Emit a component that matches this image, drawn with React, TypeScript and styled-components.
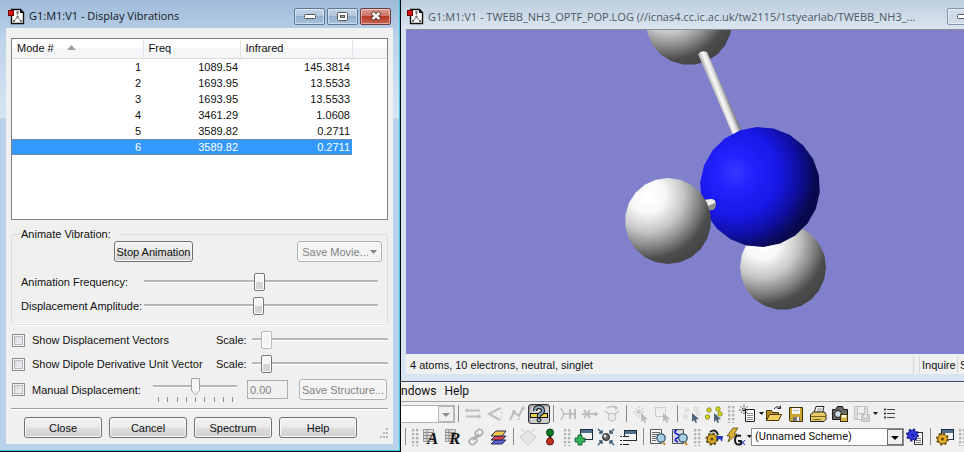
import React from "react";
import styled, { createGlobalStyle, css } from "styled-components";

const SANS = '"Liberation Sans", Arial, sans-serif';
const UI = 'Roboto, "Open Sans", sans-serif';

const Global = createGlobalStyle`
  *, *::before, *::after { box-sizing: border-box; }
  body { margin: 0; background: #f0f0f0; color: #111; font: 11px/16px ${SANS}; }
  button, input, select { font: inherit; color: inherit; margin: 0; }
`;

const Desktop = styled.div`
  display: flex;
  min-height: 100vh;
  overflow: hidden;
`;

/* ---------- dialog window ---------- */

const Dialog = styled.section`
  flex: 1 1 401px;
  min-width: 0;
  display: flex;
  flex-direction: column;
  padding: 0 7px 7px 6px;
  border-right: 1px solid #05080c;
  border-bottom: 1px solid #05080c;
  box-shadow: inset -1px -1px 0 #3fc4dc;
  background: linear-gradient(#9fbbd9 0, #b4cbe4 28px, #bed3e9 40px, #d6e5f4 118px, #b9d1ea 119px);
`;

const TitleBar = styled.header<{ $inactive?: boolean }>`
  display: flex;
  align-items: center;
  gap: 4px;
  height: ${(p) => (p.$inactive ? 29 : 28)}px;
  padding: ${(p) => (p.$inactive ? "4px 0 0 6px" : "4px 2px 0 2px")};
  overflow: hidden;
  font-family: "Open Sans", "Noto Sans", sans-serif;
  color: ${(p) => (p.$inactive ? "#4c5866" : "#101820")};
  background: ${(p) => (p.$inactive ? "linear-gradient(#bccddd, #dbe6f0)" : "none")};
`;

const Title = styled.h1`
  flex: 1;
  min-width: 0;
  margin: 0;
  overflow: hidden;
  white-space: nowrap;
  font-size: 11px;
  line-height: 16px;
  font-weight: 400;
`;

const Caption = styled.div`
  display: flex;
  flex: none;
  gap: 2px;
`;

const CaptionButton = styled.button<{ $close?: boolean; $pale?: boolean }>`
  flex: none;
  display: flex;
  align-items: center;
  justify-content: center;
  width: 31px;
  height: 17px;
  padding: 0;
  margin-right: ${(p) => (p.$pale ? -14 : 0)}px;
  border: 1px solid ${(p) => (p.$close ? "#6a3a40" : p.$pale ? "#8295aa" : "#5f7896")};
  border-radius: 2px;
  box-shadow: inset 0 0 0 1px rgba(255, 255, 255, 0.45);
  background: ${(p) =>
    p.$close
      ? "linear-gradient(#d99a90 0 , #cf7467 45%, #b5392b 50%, #cc6450)"
      : p.$pale
        ? "#cfdce8"
        : "linear-gradient(#c3d5e8, #b0c6de 45%, #93afcd 50%, #a9c3de)"};
`;

const Body = styled.form`
  flex: 1;
  display: flex;
  flex-direction: column;
  padding: 10px 5px 5px 5px;
  background: #f0f0f0;
`;

const ListBox = styled.div`
  height: 182px;
  border: 1px solid #7c8087;
  background: #fff;
  overflow: hidden;
`;

const Table = styled.table`
  width: 100%;
  border-collapse: collapse;
  table-layout: fixed;
`;

const Head = styled.th`
  height: 19px;
  padding: 0 6px 0 5px;
  text-align: left;
  font-weight: 400;
  white-space: nowrap;
  border-right: 1px solid #e0e3e8;
  border-bottom: 1px solid #d8dadf;
  background: linear-gradient(#fff 0 45%, #f5f6f8 50%);
  &:last-child { border-right: 0; }
  svg { margin-left: 10px; vertical-align: 2px; }
`;

const Row = styled.tr<{ $selected?: boolean }>`
  ${(p) =>
    p.$selected &&
    css`
      color: #fff;
      td:not(:last-child) { background: linear-gradient(#7288a8 1px, #3399ff 1px 15px, #7288a8 15px); }
    `}
`;

const Cell = styled.td`
  height: 16px;
  padding: 0 2px 0 0;
  line-height: 16px;
  text-align: right;
`;

const Group = styled.fieldset`
  display: flex;
  flex-direction: column;
  min-width: 0;
  margin: 6px 0 0;
  padding: 0 4px 6px 9px;
  border: 1px solid #d8dde1;
  border-radius: 3px;
  box-shadow: inset 0 -1px 0 #fff, 0 1px 0 #fff;
`;

const Legend = styled.legend`
  padding: 0 8px 0 0;
  line-height: 16px;
`;

const Line = styled.div<{ $h?: number; $end?: number }>`
  display: flex;
  align-items: center;
  height: ${(p) => p.$h ?? 24}px;
  padding-right: ${(p) => p.$end ?? 0}px;
`;

const GroupActions = styled.div`
  display: flex;
  justify-content: space-between;
  padding: 0 1px 8px 93px;
  margin-top: -1px;
`;

const Button = styled.button<{ $w: number }>`
  flex: none;
  width: ${(p) => p.$w}px;
  height: 21px;
  padding: 0;
  display: flex;
  align-items: center;
  justify-content: center;
  gap: 1px;
  white-space: nowrap;
  border: 1px solid #707070;
  border-radius: 3px;
  box-shadow: inset 0 0 0 1px #fafafa;
  background: linear-gradient(#f3f3f3, #ebebeb 48%, #dedede 52%, #d0d0d0);
  &:disabled {
    color: #838383;
    border-color: #adb2b5;
    background: #f4f4f4;
  }
`;

const SliderLabel = styled.label<{ $w: number }>`
  flex: none;
  width: ${(p) => p.$w}px;
  white-space: nowrap;
`;

const POINTER =
  "data:image/svg+xml,%3Csvg xmlns='http://www.w3.org/2000/svg' width='11' height='18'%3E%3Cpath d='M1.5 .5h8v12l-4 4.500l-4-4.500z' fill='%23f5f5f5' stroke='%23a4a4a4'/%3E%3C/svg%3E";

const Slider = styled.input<{ $pointer?: boolean }>`
  -webkit-appearance: none;
  appearance: none;
  flex: ${(p) => (p.$pointer ? "none" : 1)};
  min-width: 0;
  height: 18px;
  margin-bottom: ${(p) => (p.$pointer ? 0 : 2)}px;
  background: none;
  &::-webkit-slider-runnable-track {
    height: 3px;
    border-top: 2px solid #b4b6b8;
    border-bottom: 1px solid #fff;
  }
  &::-webkit-slider-thumb {
    -webkit-appearance: none;
    width: 11px;
    height: 18px;
    margin-top: -9px;
    border: 1px solid #777;
    border-radius: 2px;
    box-shadow: inset 0 0 0 1px #fff;
    background: linear-gradient(#f4f4f4 50%, #d4d4d4 50%);
    ${(p) =>
      p.$pointer &&
      css`
        border: 0;
        box-shadow: none;
        background: url("${POINTER}") no-repeat;
      `}
  }
  &:disabled::-webkit-slider-thumb {
    border-color: #b8b8b8;
    ${(p) => !p.$pointer && "background: #f4f4f4;"}
  }
`;

const Checkbox = styled.input`
  appearance: none;
  flex: none;
  width: 13px;
  height: 13px;
  margin: 0 7px 0 0;
  border: 1px solid #8c8e90;
  box-shadow: inset 0 0 0 1px #f4f4f4, inset 0 0 0 2px #b8bcc0;
  background: linear-gradient(135deg, #d2d5d8, #f6f6f6);
`;

const CheckLabel = styled.label<{ $w: number }>`
  display: flex;
  align-items: center;
  flex: none;
  width: ${(p) => p.$w}px;
  padding-left: 1px;
  white-space: nowrap;
`;

const Checks = styled.div`
  display: flex;
  flex-direction: column;
  padding-top: 3px;
`;

const TickSlider = styled.div`
  display: flex;
  flex-direction: column;
  width: 84px;
`;

const Ticks = styled.div`
  display: flex;
  justify-content: space-between;
  height: 5px;
  padding: 0 4px 0 5px;
  margin-top: 2px;
  i { width: 1px; background: #8f8f8f; }
`;

const ValueBox = styled.input`
  flex: none;
  width: 41px;
  height: 19px;
  margin: 0 11px 0 10px;
  padding: 0 2px;
  border: 1px solid #a9adb2;
  border-radius: 0;
  background: #f0f0f0;
  &:disabled { color: #838383; }
`;

const Footer = styled.footer`
  display: flex;
  gap: 7px;
  margin-top: 5px;
  padding: 8px 0 0 13px;
  border-top: 1px solid #a0a0a0;
  box-shadow: inset 0 1px 0 #fff;
`;

const GripCorner = styled.svg`
  align-self: flex-end;
  margin-left: auto;
`;

/* ---------- right side ---------- */

const RightSide = styled.div`
  flex: 1 1 563px;
  min-width: 0;
  display: flex;
  flex-direction: column;
`;

const Viewer = styled.section`
  flex: 1;
  display: flex;
  flex-direction: column;
  border-bottom: 1px solid #40474e;
`;

const ViewerFrame = styled.div`
  flex: 1;
  display: flex;
  flex-direction: column;
  padding: 0 0 7px 5px;
  background: #d7e4f1;
`;

const Canvas = styled.div`
  flex: 1;
  display: flex;
  min-height: 200px;
  border-top: 1px solid #8c8c98;
  background: #8080cc;
  svg { flex: 1; width: 0; min-width: 100%; height: 0; min-height: 100%; }
`;

const StatusBar = styled.footer`
  display: flex;
  align-items: center;
  height: 20px;
  padding: 2px 0 0 4px;
  white-space: nowrap;
  overflow: hidden;
  background: #f0f0f0;
`;

const StatusText = styled.span`
  flex: 1;
`;

const Pane = styled.span<{ $w: number }>`
  flex: none;
  width: ${(p) => p.$w}px;
  height: 16px;
  padding-left: 2px;
  border-left: 1px solid #d4d4d4;
`;

const Menu = styled.nav`
  display: flex;
  gap: 8px;
  height: 20px;
  padding-bottom: 2px;
  align-items: center;
  border-bottom: 1px solid #a5a5a5;
  font-family: ${UI};
  font-size: 12px;
  a { color: inherit; text-decoration: none; }
`;

const Toolbar = styled.div`
  display: flex;
  align-items: center;
  height: 23px;
  overflow: hidden;
`;

const Toolbars = styled.div`
  padding: 0 0 4px;
`;

const Tool = styled.button<{ $active?: boolean }>`
  flex: none;
  display: flex;
  align-items: center;
  justify-content: center;
  width: 22px;
  height: 20px;
  padding: 0;
  border: ${(p) => (p.$active ? "1px solid #333" : "0")};
  border-radius: 3px;
  background: ${(p) => (p.$active ? "#cfcfcf" : "none")};
  box-shadow: ${(p) => (p.$active ? "inset 1px 1px 2px #888" : "none")};
  svg { flex: none; overflow: visible; }
`;

const Divider = styled.span<{ $w: number }>`
  flex: none;
  width: ${(p) => p.$w}px;
  height: 17px;
  background: linear-gradient(#8a8a8a, #8a8a8a) center / 1px 100% no-repeat;
`;

const Handle = styled.span`
  flex: none;
  width: 12px;
  height: 18px;
  background: radial-gradient(circle at 1px 1px, #b4b4b4 1px, transparent 2px) 3px 1px / 4px 4px;
  background-clip: content-box;
  padding: 0 2px 0 3px;
`;

const DropArrow = styled.button`
  flex: none;
  display: flex;
  justify-content: center;
  width: 4px;
  height: 18px;
  align-items: center;
  padding: 0;
  border: 0;
  background: none;
  svg { flex: none; width: 5px; height: 3px; }
`;

const Combo = styled.select<{ $w: number }>`
  appearance: none;
  flex: none;
  width: ${(p) => p.$w}px;
  height: 18px;
  padding: 0 18px 0 3px;
  border: 1px solid #8c8c8c;
  border-radius: 0;
  font-family: ${UI};
  font-size: 11px;
  line-height: 14px;
  background:
    url("data:image/svg+xml,%3Csvg xmlns='http://www.w3.org/2000/svg' width='16' height='16'%3E%3Crect x='.5' y='.5' width='15' height='15' fill='%23f0f0f0' stroke='%23707070'/%3E%3Cpath d='M4 7h8l-4 4z' fill='%23000'/%3E%3C/svg%3E") right center no-repeat,
    #fff;
  &:disabled {
    opacity: 1;
    border-left: 0;
    border-color: #b4b4b4;
    background:
      url("data:image/svg+xml,%3Csvg xmlns='http://www.w3.org/2000/svg' width='16' height='16'%3E%3Crect x='.5' y='.5' width='15' height='15' fill='%23f0f0f0' stroke='%23b8b8b8'/%3E%3Cpath d='M4 7h8l-4 4z' fill='%23909090'/%3E%3C/svg%3E") right center no-repeat,
      #fff;
  }
`;

/* ---------- drawings ---------- */

const AppIcon = () => (
  <svg width="17" height="17" viewBox="0 0 17 17">
    <path d="M3.500 1.500h9l3 3v11h-12z" fill="#fff" stroke="#111" strokeWidth="1.400" />
    <path d="M12 1v4h4" fill="#111" />
    <path d="M9.500 4v5M9.500 9l-3.500 4M9.500 9l3.500 4" stroke="#aaa" strokeWidth="1.200" fill="none" />
    <g fill="#777"><rect x="8.500" y="3" width="2" height="3" /><rect x="8.500" y="8" width="2" height="2" /><rect x="5" y="12" width="2" height="2" /><rect x="12" y="12" width="2" height="2" /></g>
    <rect x=".5" y="2.500" width="5" height="5" fill="#d80f0f" stroke="#700" />
  </svg>
);

const Down = ({ color = "#111" }: { color?: string }) => (
  <svg width="7" height="4" viewBox="0 0 7 4"><path d="M0 0h7L3.500 4z" fill={color} /></svg>
);

const SIDES = 22;
const facets = (cx: number, cy: number, r: number, turn = 0) =>
  Array.from({ length: SIDES }, (_, i) => {
    const a = ((i + turn) * Math.PI * 2) / SIDES;
    return `${(cx + r * Math.cos(a)).toFixed(1)},${(cy + r * Math.sin(a)).toFixed(1)}`;
  }).join(" ");

const Molecule = () => (
  <svg viewBox="0 0 558 324" preserveAspectRatio="xMidYMin slice" role="img" aria-label="Ammonia molecule">
    <defs>
      <radialGradient id="h" cx=".26" cy=".2" r=".88">
        <stop offset="0" stopColor="#fff" /><stop offset=".24" stopColor="#f7f7f7" />
        <stop offset=".48" stopColor="#c6c6c6" /><stop offset=".68" stopColor="#858585" />
        <stop offset=".84" stopColor="#4c4c4c" /><stop offset="1" stopColor="#444" />
      </radialGradient>
      <radialGradient id="n" cx=".29" cy=".38" r=".76">
        <stop offset="0" stopColor="#3838ff" /><stop offset=".2" stopColor="#2222fe" />
        <stop offset=".48" stopColor="#1818e6" /><stop offset=".7" stopColor="#0f0fa0" />
        <stop offset=".88" stopColor="#090952" /><stop offset="1" stopColor="#080848" />
      </radialGradient>
      <linearGradient id="b" gradientUnits="userSpaceOnUse" x1="309" y1="64" x2="319" y2="60">
        <stop offset="0" stopColor="#b8b8b8" /><stop offset=".35" stopColor="#fafafa" />
        <stop offset=".65" stopColor="#d8d8d8" /><stop offset="1" stopColor="#707070" />
      </linearGradient>
    </defs>
    <polygon points={facets(283, -8, 43)} fill="url(#h)" />
    <path d="M292 24q3-4 9-2l36 82-8 6z" fill="url(#b)" />
    <polygon points={facets(377, 237, 43)} fill="url(#h)" />
    <polygon points={facets(354, 157, 60, 0.3)} fill="url(#n)" />
    <path d="M298 170l8-1q4 1 4 5 0 4-3 6l-9 1z" fill="#8c8c8c" />
    <path d="M298 170l8-1q4 1 3 4l-7 3z" fill="#ececec" />
    <polygon points={facets(262, 191, 43, 0.5)} fill="url(#h)" />
  </svg>
);

const Ico = ({ children, c = "none", s }: { children: React.ReactNode; c?: string; s?: string }) => (
  <svg width="18" height="18" viewBox="0 0 18 18" fill={c} stroke={s}>{children}</svg>
);

const G = "#bdbdbd";
const BondIcon = () => <Ico s={G}><path d="M2 5.500h14M2 11.500h14" strokeWidth="2" /><path d="M4 3.500L1 5.500l3 2M14 9.500l3 2-3 2" /></Ico>;
const AngleIcon = () => <Ico s={G}><path d="M14 3L3 9l11 6" strokeWidth="2" /><path d="M14 3q4 6 0 12" strokeDasharray="2 2" /></Ico>;
const DihedralIcon = () => <Ico s={G}><path d="M2 15l4-8 5 4 4-8" strokeWidth="2" /><circle cx="15" cy="3" r="1.500" /><circle cx="6" cy="7" r="1.500" /><path d="M9 14h3" /></Ico>;
const QueryIcon = () => (
  <Ico>
    <path d="M0 10.500h18" stroke="#111" strokeWidth="5" /><path d="M1 10.500h16" stroke="#e8d23c" strokeWidth="3" />
    <path d="M5 6q0-4 4-4t4 4q0 2-4 4v2" fill="none" stroke="#111" strokeWidth="4" />
    <path d="M5 6q0-4 4-4t4 4q0 2-4 4v2" fill="none" stroke="#8fa9bd" strokeWidth="2" />
    <circle cx="9" cy="15" r="2" fill="#8fa9bd" stroke="#111" />
  </Ico>
);
const AddHIcon = () => <Ico s={G}><path d="M2 3l3 6-3 6M5 9h5" strokeWidth="1.500" /><path d="M11 4v10M16 4v10M11 9h5" strokeWidth="2" /></Ico>;
const CutIcon = () => <Ico s={G}><path d="M1 9h15" strokeWidth="2" /><path d="M3 5l6 8M3 13l6-8" strokeWidth="2" /><circle cx="15" cy="9" r="1.500" /></Ico>;
const RotateIcon = () => <Ico s={G}><path d="M2 6l7 5 7-5M4 3q5-3 10 0M12 1l2 2-2 2" strokeWidth="1.300" /><circle cx="9" cy="12" r="4" fill="#e8e8e8" /></Ico>;
const Pointer = ({ c }: { c: string }) => <path d="M9 8l7 6-3 .500 1 3-1.500.500-1.500-3-2 2z" fill={c} stroke="none" />;
const StarSel = () => <Ico s={G}><path d="M7 1v12M1 7h12M3 3l8 8M11 3l-8 8" strokeDasharray="2 1" /><Pointer c="#bbb" /></Ico>;
const BoxSel = () => <Ico s={G}><rect x="1.500" y="2.500" width="10" height="9" strokeDasharray="2 1" /><Pointer c="#bbb" /></Ico>;
const AtomsSel = ({ on }: { on?: boolean }) => (
  <Ico>
    {[[4, 5], [13, 4], [2.5, 12], [15, 9]].map(([x, y]) => <circle key={x} cx={x} cy={y} r="2.200" fill={on ? "#d8dc20" : "#e3e3e3"} stroke={on ? "#777a10" : "#d8d8d8"} strokeWidth=".8" />)}
    <Pointer c="#4e6377" />
  </Ico>
);
const NewIcon = () => (
  <Ico><path d="M6.500 4.500h9v12h-9z" fill="#fff" stroke="#222" /><path d="M8 8.500h6M8 10.500h6M8 12.500h6M8 14.500h6" stroke="#888" /><path d="M5 0v10M0 5h10M1.500 1.500l7 7M8.500 1.500l-7 7" stroke="#333" strokeDasharray="1.500 1" /></Ico>
);
const OpenIcon = () => (
  <Ico><path d="M1.500 15.500v-10h5l1 2h6v8z" fill="#b88f1c" stroke="#4a3908" /><path d="M1.500 15.500l3-6h12l-3 6z" fill="#f2cf58" stroke="#4a3908" /><path d="M9 4q3-4 6-1M15.500 .5v3h-3" stroke="#222" /></Ico>
);
const SaveIcon = () => (
  <Ico><path d="M2.500 2.500h13v14h-12l-1-1z" fill="#c9a52e" stroke="#3d3108" /><rect x="5" y="3" width="8" height="6" fill="#f4f4f4" /><path d="M6 5.500h6" stroke="#bbb" /><rect x="6" y="12" width="7" height="4" fill="#777" /><rect x="10" y="12" width="2" height="4" fill="#eee" /></Ico>
);
const PrintIcon = () => (
  <Ico><path d="M5 8l2-6.500h8L13.500 8" fill="#fff" stroke="#222" /><path d="M8 4h5M7.500 6h5" stroke="#888" /><path d="M1.500 9.500l3-2.500h11l1.500 2.500v5l-2 2h-13.500z" fill="#e6ca66" stroke="#222" /><path d="M2 11.500h14M4 14.500h8" stroke="#7c6820" /></Ico>
);
const CameraIcon = () => (
  <Ico><path d="M1.500 4.500h3l2-3h5l1 3h4v10h-15z" fill="#6a6a66" stroke="#181818" /><circle cx="7" cy="9" r="3.500" fill="#c8dbe2" stroke="#111" /><rect x="9.500" y="9.500" width="7" height="7" fill="#d9b641" stroke="#3d3108" /><rect x="11" y="10" width="4" height="2.500" fill="#fff" /></Ico>
);
const FilmIcon = () => (
  <Ico s="#c0c0c0"><path d="M1.500 1.500h13v13h-13zM4.500 1.500v13M11.500 1.500v13M4.500 8.500h7" /><path d="M2 4h2M2 7h2M2 10h2M2 13h2M12 4h2M12 7h2" /><rect x="8.500" y="9.500" width="8" height="7" fill="#d0d0d0" /><path d="M11 10v3h3v-3" fill="#fff" /></Ico>
);
const ListIcon = () => <Ico><path d="M8 4.500h8M8 8.500h8M8 12.500h8" stroke="#444" /><path d="M5 4.500h2M5 8.500h2M5 12.500h2" stroke="#444" strokeWidth="2" /></Ico>;

const Letter = styled.text`
  font: italic 700 17px "Liberation Serif", serif;
  fill: #111;
`;
const LetterDoc = ({ l }: { l: string }) => (
  <Ico><path d="M.5 1.500h10v12H.5z" fill="#ddd" stroke="#999" /><path d="M1 4.500h9M1 7.500h9M1 10.500h9M4 2v11" stroke="#888" /><Letter x="4" y="16">{l}</Letter></Ico>
);
const LinkIcon = () => <Ico s="#a9a9a9"><rect x="8" y="2" width="8" height="6" rx="3" transform="rotate(-40 12 5)" strokeWidth="1.500" /><rect x="2" y="10" width="8" height="6" rx="3" transform="rotate(-40 6 13)" strokeWidth="1.500" /><path d="M6 12l6-6" strokeWidth="2" /></Ico>;
const LayersIcon = () => (
  <Ico s="#2b2b50">
    <path d="M2 16l4-4h11l-4 4z" fill="#5a66d8" /><path d="M2 12l4-4h11l-4 4z" fill="#d94050" /><path d="M2 8l5-5h10l-4 5z" fill="#efc84a" />
  </Ico>
);
const DiamondIcon = () => <Ico s="#c6c6c6"><path d="M9 2l8 7-8 8-8-8z" fill="#e6e6e6" /><path d="M2 1l3 3M16 1l-3 3" /></Ico>;
const DumbbellIcon = () => <Ico><path d="M9 3v12" stroke="#333" strokeWidth="3" /><circle cx="9" cy="4.500" r="3.500" fill="#0c7a22" stroke="#084010" /><circle cx="9" cy="13.500" r="3.500" fill="#c23216" stroke="#611" /></Ico>;
const Win = ({ x = 4, y = 2 }) => <><rect x={x + 0.5} y={y + 0.5} width="12" height="10" fill="#f4f4f4" stroke="#1e2c38" /><rect x={x + 1} y={y + 1} width="11" height="3" fill="#4d718e" /></>;
const AddWinIcon = () => <Ico><Win x={5} y={1} /><path d="M3 7h4v3h3v4H7v3H3v-3H0v-4h3z" fill="#34b559" stroke="#0e5225" strokeWidth=".8" /></Ico>;
const FitIcon = () => <Ico><path d="M1 1l4 4M17 1l-4 4M1 17l4-4M17 17l-4-4M5 2v3H2M13 2v3h3M5 16v-3H2M13 16v-3h3" stroke="#35566f" strokeWidth="1.300" /><circle cx="9" cy="9" r="3.500" fill="#666" stroke="#222" /><circle cx="8" cy="8" r="1.500" fill="#ddd" /></Ico>;
const ListWinIcon = () => <Ico><Win x={5} y={2} /><rect x="0" y="8" width="10" height="9" fill="#f4f4f4" /><path d="M1 8.500h2M1 12.500h2M1 16.500h2M4 8.500h6M4 12.500h6M4 16.500h6" stroke="#222" /></Ico>;
const DocFind = ({ wave }: { wave?: boolean }) => (
  <Ico><path d="M1.500 1.500h11v14h-11z" fill={wave ? "#d8d8e0" : "#f4f4f4"} stroke="#555" />
    {wave ? <path d="M6 2q-5 2 0 4t0 4q-4 2 1 4" stroke="#1414d0" strokeWidth="1.500" /> : <path d="M3 4.500h8M3 6.500h8M3 8.500h4M3 10.500h4M3 12.500h4" stroke="#666" />}
    <circle cx="12" cy="10" r="4.200" fill="#a9cfe6" stroke="#35566f" strokeWidth="1.300" /><path d="M14 14l2 3" stroke="#c08a30" strokeWidth="2" /></Ico>
);
const Cog = ({ x, y, c, d }: { x: number; y: number; c: string; d: string }) => (
  <g><circle cx={x} cy={y} r="5" fill="none" stroke={d} strokeWidth="3" strokeDasharray="2 1.900" /><circle cx={x} cy={y} r="4.800" fill={c} stroke={d} /><circle cx={x} cy={y} r="1.500" fill={d} /></g>
);
const GearArrow = () => <Ico><Cog x={7} y={11} c="#d8a820" d="#5c4408" /><path d="M5 4q6-4 8 3" stroke="#222" strokeWidth="2" /><path d="M12 8h6l-1 6-2-3-3 1z" fill="#223cc0" /></Ico>;
const BoltG = () => <Ico><path d="M6 0h5L7 6h3L1 14l2-6H0z" fill="#dcb43c" stroke="#5c4408" strokeWidth=".8" /><path d="M14 8q-6-2-6 4t6 4v-3h-3" stroke="#1c1c1c" strokeWidth="2" /><path d="M14 12l4 5M18 12l-4 5" stroke="#2233c0" /></Ico>;
const BlueGear = () => <Ico><rect x="8.500" y="4.500" width="8" height="12" fill="#fff" stroke="#333" /><path d="M10 10.500h5M10 12.500h5M10 14.500h5" stroke="#777" /><Cog x={6.5} y={7} c="#3038dd" d="#181c90" /></Ico>;
const GearWin = () => <Ico><Win x={5} y={1} /><Cog x={6.5} y={11} c="#e2ac2c" d="#6c4a08" /></Ico>;

/* ---------- data ---------- */

const modes = [
  ["1", "1089.54", "145.3814"],
  ["2", "1693.95", "13.5533"],
  ["3", "1693.95", "13.5533"],
  ["4", "3461.29", "1.0608"],
  ["5", "3589.82", "0.2711"],
  ["6", "3589.82", "0.2711"],
];

const TICKS = Array.from({ length: 9 }, (_, i) => i);

type ToolDef = [string, React.ReactNode];
const Tools = ({ items }: { items: ToolDef[] }) => (
  <>{items.map(([name, icon]) => <Tool type="button" key={name} aria-label={name}>{icon}</Tool>)}</>
);

const VibrationsDialog = () => (
  <Dialog>
    <TitleBar>
      <AppIcon />
      <Title>G1:M1:V1 - Display Vibrations</Title>
      <Caption>
        <CaptionButton aria-label="Minimize"><svg width="12" height="5"><rect x=".5" y=".5" width="11" height="4" rx="1" fill="#fff" stroke="#555" /></svg></CaptionButton>
        <CaptionButton aria-label="Maximize"><svg width="11" height="9"><rect x=".5" y=".5" width="10" height="8" rx="1" fill="#fff" stroke="#555" /><rect x="3.500" y="3.500" width="4" height="2" fill="#9ab" stroke="#555" /></svg></CaptionButton>
        <CaptionButton $close aria-label="Close window"><svg width="12" height="10"><path d="M2 1.500l8 7M10 1.500l-8 7" stroke="#533" strokeWidth="4" /><path d="M2.500 2l7 6M9.500 2l-7 6" stroke="#fff" strokeWidth="2.400" /></svg></CaptionButton>
      </Caption>
    </TitleBar>
    <Body>
      <ListBox>
        <Table>
          <colgroup><col width="131" /><col width="97" /><col width="112" /><col /></colgroup>
          <thead>
            <tr>
              <Head>Mode # <svg width="9" height="5"><path d="M0 5h9L4.500 0z" fill="#a0a0a0" /></svg></Head>
              <Head>Freq</Head>
              <Head>Infrared</Head>
              <Head aria-hidden="true" />
            </tr>
          </thead>
          <tbody>
            {modes.map((m, i) => (
              <Row key={m[0]} $selected={i === 5} aria-selected={i === 5}>
                {m.map((v, j) => <Cell key={j}>{v}</Cell>)}
                <Cell />
              </Row>
            ))}
          </tbody>
        </Table>
      </ListBox>

      <Group>
        <Legend>Animate Vibration:</Legend>
        <GroupActions>
          <Button type="button" $w={79}>Stop Animation</Button>
          <Button type="button" $w={85} disabled>Save Movie...<Down color="#838383" /></Button>
        </GroupActions>
        <Line $end={5}>
          <SliderLabel $w={123} htmlFor="freq">Animation Frequency:</SliderLabel>
          <Slider id="freq" type="range" max="1000" defaultValue="493" />
        </Line>
        <Line $end={5}>
          <SliderLabel $w={123} htmlFor="amp">Displacement Amplitude:</SliderLabel>
          <Slider id="amp" type="range" max="1000" defaultValue="489" />
        </Line>
      </Group>

      <Checks>
        <Line>
          <CheckLabel $w={205}><Checkbox type="checkbox" />Show Displacement Vectors</CheckLabel>
          <SliderLabel $w={36} htmlFor="scale1">Scale:</SliderLabel>
          <Slider id="scale1" type="range" max="1000" defaultValue="73" disabled />
        </Line>
        <Line>
          <CheckLabel $w={205}><Checkbox type="checkbox" />Show Dipole Derivative Unit Vector</CheckLabel>
          <SliderLabel $w={36} htmlFor="scale2">Scale:</SliderLabel>
          <Slider id="scale2" type="range" max="1000" defaultValue="73" />
        </Line>
        <Line $h={27}>
          <CheckLabel $w={142}><Checkbox type="checkbox" />Manual Displacement:</CheckLabel>
          <TickSlider>
            <Slider $pointer type="range" aria-label="Manual displacement" disabled />
            <Ticks>{TICKS.map((i) => <i key={i} />)}</Ticks>
          </TickSlider>
          <ValueBox aria-label="Displacement value" defaultValue="0.00" disabled />
          <Button type="button" $w={88} disabled>Save Structure...</Button>
        </Line>
      </Checks>

      <Footer>
        {["Close", "Cancel", "Spectrum", "Help"].map((t) => <Button type="button" $w={78} key={t}>{t}</Button>)}
        <GripCorner width="10" height="10" fill="#b4b4b4">
          {[[8, 0], [5, 4], [8, 4], [2, 8], [5, 8], [8, 8]].map(([x, y]) => <rect key={`${x}-${y}`} x={x} y={y} width="2" height="2" />)}
        </GripCorner>
      </Footer>
    </Body>
  </Dialog>
);

const App = () => (
  <>
    <Global />
    <Desktop>
      <VibrationsDialog />
      <RightSide>
        <Viewer>
          <TitleBar $inactive>
            <AppIcon />
            <Title>G1:M1:V1 - TWEBB_NH3_OPTF_POP.LOG (//icnas4.cc.ic.ac.uk/tw2115/1styearlab/TWEBB_NH3_...</Title>
            <CaptionButton $pale aria-label="Minimize viewer"><svg width="12" height="5"><rect x=".5" y=".5" width="11" height="4" rx="1" fill="#fff" stroke="#555" /></svg></CaptionButton>
          </TitleBar>
          <ViewerFrame>
            <Canvas><Molecule /></Canvas>
            <StatusBar>
              <StatusText>4 atoms, 10 electrons, neutral, singlet</StatusText>
              <Pane $w={6} />
              <Pane $w={38}>Inquire</Pane>
              <Pane $w={7}>S</Pane>
            </StatusBar>
          </ViewerFrame>
        </Viewer>
        <Menu><a href="#windows">ndows</a><a href="#help">Help</a></Menu>
        <Toolbars>
          <Toolbar>
            <Combo $w={54} disabled aria-label="Fragment" />
            <Divider $w={7} />
            <Tools items={[["Bond", <BondIcon />], ["Angle", <AngleIcon />], ["Dihedral", <DihedralIcon />]]} />
            <Tool type="button" $active aria-label="Inquire"><QueryIcon /></Tool>
            <Divider $w={7} />
            <Tools items={[["Add valence", <AddHIcon />], ["Delete atom", <CutIcon />], ["Invert", <RotateIcon />]]} />
            <Divider $w={7} />
            <Tools items={[["Select atom", <StarSel />], ["Marquee", <BoxSel />]]} />
            <Divider $w={7} />
            <Tools items={[["Clear selection", <AtomsSel />], ["Select all", <AtomsSel on />]]} />
            <Handle />
            <Tools items={[["New", <NewIcon />]]} />
            <DropArrow aria-label="New options"><Down /></DropArrow>
            <Tools items={[["Open", <OpenIcon />], ["Save", <SaveIcon />], ["Print", <PrintIcon />], ["Capture", <CameraIcon />], ["Movie", <FilmIcon />]]} />
            <DropArrow aria-label="Movie options"><Down /></DropArrow>
            <Tools items={[["List", <ListIcon />]]} />
          </Toolbar>
          <Toolbar>
            <Divider $w={8} />
            <Handle />
            <Tools items={[["Atom list", <LetterDoc l="A" />], ["Redundant coordinates", <LetterDoc l="R" />], ["Connections", <LinkIcon />], ["Layers", <LayersIcon />]]} />
            <Divider $w={8} />
            <Tools items={[["Symmetry", <DiamondIcon />], ["Orbitals", <DumbbellIcon />]]} />
            <Handle />
            <Tools items={[["Add view", <AddWinIcon />], ["Centre", <FitIcon />], ["View list", <ListWinIcon />]]} />
            <Divider $w={8} />
            <Tools items={[["View file", <DocFind />], ["Spectra", <DocFind wave />]]} />
            <Handle />
            <Tools items={[["Calculate", <GearArrow />], ["Quick launch", <BoltG />]]} />
            <DropArrow aria-label="Launch options"><Down /></DropArrow>
            <Combo $w={153} aria-label="Scheme"><option>(Unnamed Scheme)</option></Combo>
            <Tools items={[["Edit scheme", <BlueGear />]]} />
            <Divider $w={8} />
            <Tools items={[["Job manager", <GearWin />]]} />
            <Handle />
          </Toolbar>
        </Toolbars>
      </RightSide>
    </Desktop>
  </>
);

export default App;
